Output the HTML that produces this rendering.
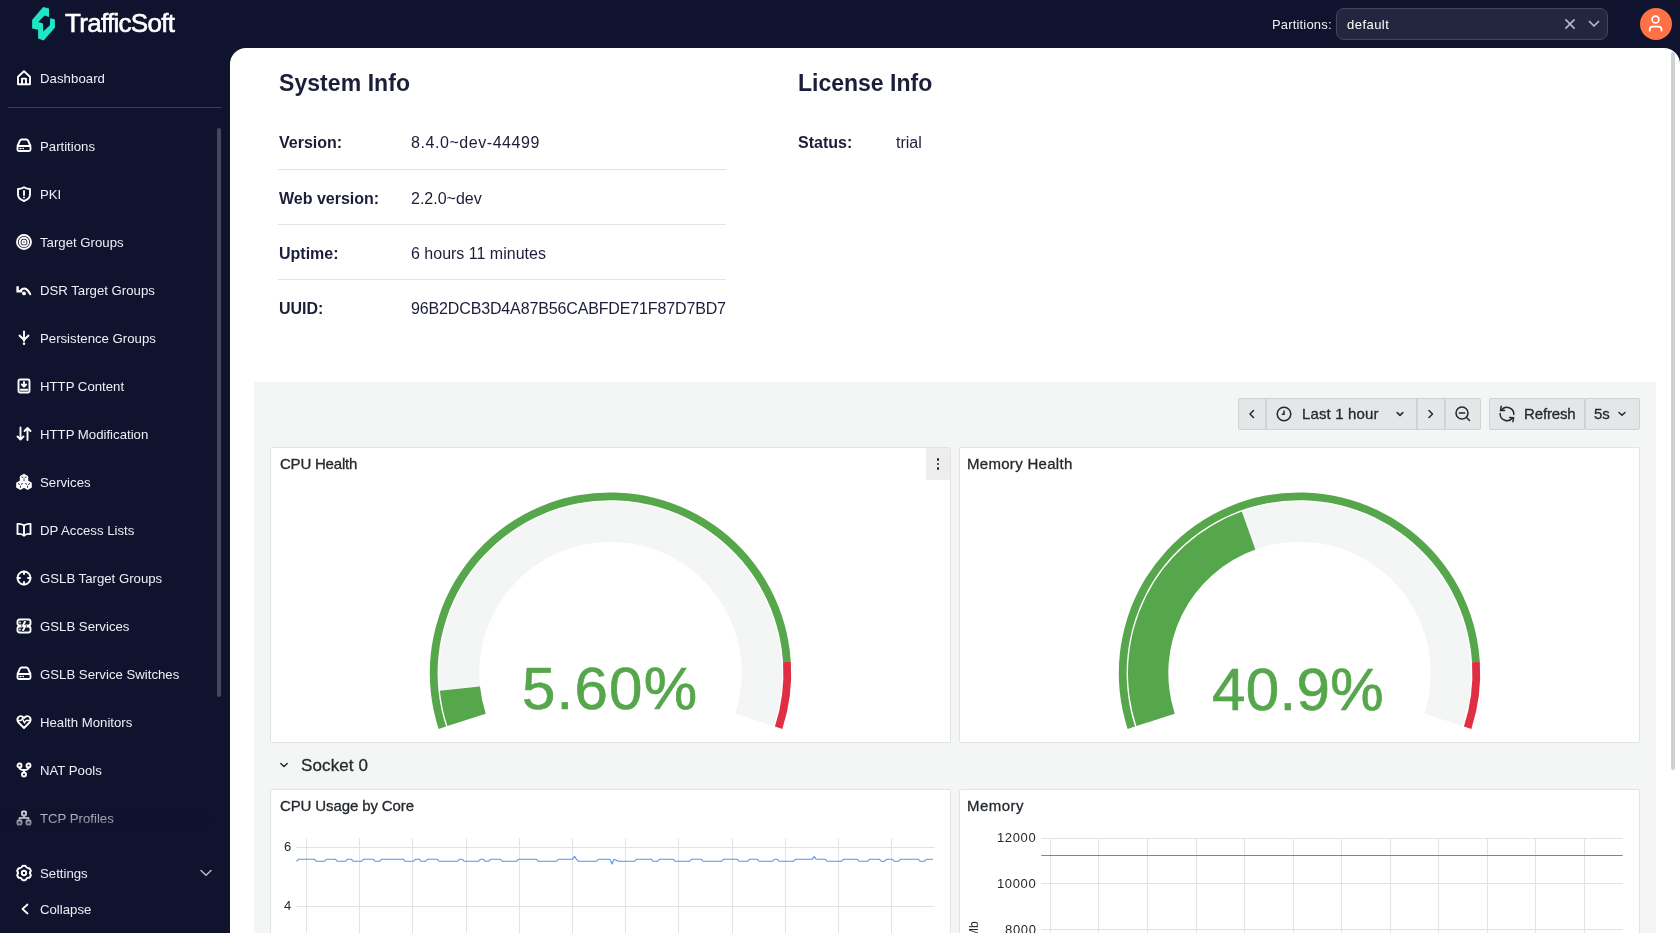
<!DOCTYPE html>
<html><head><meta charset="utf-8">
<style>
*{box-sizing:border-box;margin:0;padding:0}
html,body{width:1680px;height:933px;overflow:hidden;background:#10132e;font-family:"Liberation Sans",sans-serif}
.abs{position:absolute}
.t{position:absolute;white-space:nowrap;line-height:1;will-change:transform}
svg{position:absolute;overflow:visible}
</style></head><body>

<svg style="left:0;top:0" width="80" height="48" viewBox="0 0 80 48">
<path d="M43.2 7.0 L49.0 8.5 L49.0 16.9 L44.5 15.4 L38.3 22.0 L43.0 23.4 L43.2 31.5 L49.9 25.2 L50.2 18.2 L54.8 19.3 L55.0 27.4 L43.7 40.5 L38.1 38.5 L38.1 29.7 L32.1 28.5 L32.1 20.0 Z" fill="#1fe6c8"/>
</svg>
<div class="t" style="left:65.00px;top:10.00px;font-size:26.00px;color:#ffffff;letter-spacing:-0.704px;-webkit-text-stroke:0.6px #fff;">TrafficSoft</div>
<div class="t" style="left:1271.70px;top:18.00px;font-size:13.00px;color:#eeeff4;letter-spacing:0.170px;">Partitions:</div>
<div class="abs" style="left:1336px;top:8px;width:272px;height:32px;border:1px solid #44465d;border-radius:8px;background:#23263f"></div>
<div class="t" style="left:1346.70px;top:18.00px;font-size:13.00px;color:#ffffff;letter-spacing:0.461px;">default</div>
<svg style="left:1564px;top:18px" width="12" height="12" viewBox="0 0 12 12"><path d="M1.9 1.9 L10.1 10.1 M10.1 1.9 L1.9 10.1" stroke="#b9bac6" stroke-width="1.6" stroke-linecap="round"/></svg>
<svg style="left:1588px;top:20px" width="12" height="8" viewBox="0 0 12 8"><path d="M1.5 1.5 L6 6 L10.5 1.5" stroke="#b9bac6" stroke-width="1.7" fill="none" stroke-linecap="round" stroke-linejoin="round"/></svg>
<div class="abs" style="left:1640px;top:8px;width:32px;height:32px;border-radius:50%;background:#ff7245"></div>
<svg style="left:1640px;top:8px" width="32" height="32" viewBox="0 0 32 32">
<circle cx="15.5" cy="11.5" r="3.4" stroke="#fff" stroke-width="1.6" fill="none"/>
<path d="M9.7 23.5 L9.7 21.5 Q9.7 18.6 12.6 18.6 L18.6 18.6 Q21.5 18.6 21.5 21.5 L21.5 23.5" stroke="#fff" stroke-width="1.6" fill="none"/>
</svg>
<svg style="left:16px;top:70px;opacity:1" width="16" height="16" viewBox="0 0 16 16" fill="none" stroke="#ffffff" stroke-width="1.9" stroke-linecap="round" stroke-linejoin="round"><path d="M2 14.2 L2 6.8 L8 1.3 L14 6.8 L14 14.2 Z"/><path d="M6 14.2 L6 8.6 L10 8.6 L10 14.2"/></svg>
<div class="t" style="left:40.20px;top:72.00px;font-size:13.20px;color:#eeeff4;letter-spacing:0.054px;">Dashboard</div>
<div class="abs" style="left:8px;top:107px;width:214px;height:1px;background:#3a3d55"></div>
<div class="abs" style="left:217px;top:128px;width:4px;height:569px;border-radius:2px;background:#45475c"></div>
<svg style="left:16px;top:138px;opacity:1" width="16" height="16" viewBox="0 0 16 16" fill="none" stroke="#ffffff" stroke-width="1.9" stroke-linecap="round" stroke-linejoin="round"><path d="M1.5 8 L4 2.5 Q4.5 1.5 5.5 1.5 L10.5 1.5 Q11.5 1.5 12 2.5 L14.5 8"/><rect x="1.5" y="8" width="13" height="5" rx="1.5"/><path d="M4 10.5 L5 10.5 M7 10.5 L7.5 10.5" stroke-width="1.3"/></svg>
<div class="t" style="left:40.20px;top:140.00px;font-size:13.20px;color:#eeeff4;">Partitions</div>
<svg style="left:16px;top:186px;opacity:1" width="16" height="16" viewBox="0 0 16 16" fill="none" stroke="#ffffff" stroke-width="1.9" stroke-linecap="round" stroke-linejoin="round"><path d="M8 1.2 Q11 3 14 3 L14 8.5 Q14 13 8 15 Q2 13 2 8.5 L2 3 Q5 3 8 1.2 Z"/><path d="M8 5 L8 9"/><path d="M8 11.4 L8 11.5" stroke-width="2"/></svg>
<div class="t" style="left:40.20px;top:188.00px;font-size:13.20px;color:#eeeff4;">PKI</div>
<svg style="left:16px;top:234px;opacity:1" width="16" height="16" viewBox="0 0 16 16" fill="none" stroke="#ffffff" stroke-width="1.9" stroke-linecap="round" stroke-linejoin="round"><circle cx="8" cy="8" r="7"/><circle cx="8" cy="8" r="4.3"/><circle cx="8" cy="8" r="1.6"/></svg>
<div class="t" style="left:40.20px;top:236.00px;font-size:13.20px;color:#eeeff4;">Target Groups</div>
<svg style="left:16px;top:282px;opacity:1" width="16" height="16" viewBox="0 0 16 16" fill="none" stroke="#ffffff" stroke-width="1.9" stroke-linecap="round" stroke-linejoin="round"><path d="M1.6 4.2 L1.6 9.3 L6.3 9.3" stroke-width="2.4" stroke-linecap="butt" stroke-linejoin="miter"/><path d="M4.5 8.4 Q9.5 3.2 14.3 12.2" stroke-width="2"/><circle cx="8" cy="11.4" r="1.9" fill="#fff" stroke="none"/></svg>
<div class="t" style="left:40.20px;top:284.00px;font-size:13.20px;color:#eeeff4;">DSR Target Groups</div>
<svg style="left:16px;top:330px;opacity:1" width="16" height="16" viewBox="0 0 16 16" fill="none" stroke="#ffffff" stroke-width="1.9" stroke-linecap="round" stroke-linejoin="round"><path d="M8 1.5 L8 11"/><path d="M3.5 5.5 L8 10 L12.5 5.5"/><circle cx="8" cy="13.8" r="1.3" fill="#fff" stroke="none"/></svg>
<div class="t" style="left:40.20px;top:332.00px;font-size:13.20px;color:#eeeff4;">Persistence Groups</div>
<svg style="left:16px;top:378px;opacity:1" width="16" height="16" viewBox="0 0 16 16" fill="none" stroke="#ffffff" stroke-width="1.9" stroke-linecap="round" stroke-linejoin="round"><rect x="2.5" y="1.5" width="11" height="13" rx="1.5"/><path d="M8 4 L8 8.5 M5.8 6.5 L8 8.7 L10.2 6.5"/><path d="M4.5 11.8 L11.5 11.8"/></svg>
<div class="t" style="left:40.20px;top:380.00px;font-size:13.20px;color:#eeeff4;">HTTP Content</div>
<svg style="left:16px;top:426px;opacity:1" width="16" height="16" viewBox="0 0 16 16" fill="none" stroke="#ffffff" stroke-width="1.9" stroke-linecap="round" stroke-linejoin="round"><path d="M4.5 1.5 L4.5 13.5 M1.5 10.5 L4.5 13.5 L7.5 10.5"/><path d="M11.5 14 L11.5 2 M8.5 5 L11.5 2 L14.5 5"/></svg>
<div class="t" style="left:40.20px;top:428.00px;font-size:13.20px;color:#eeeff4;">HTTP Modification</div>
<svg style="left:16px;top:474px;opacity:1" width="16" height="16" viewBox="0 0 16 16" fill="none" stroke="#ffffff" stroke-width="1.9" stroke-linecap="round" stroke-linejoin="round"><path d="M8.00 0.60 L11.46 2.60 L11.46 6.60 L8.00 8.60 L4.54 6.60 L4.54 2.60 Z" fill="#fff" stroke="#fff" stroke-width="1.5"/><path d="M4.40 7.20 L7.86 9.20 L7.86 13.20 L4.40 15.20 L0.94 13.20 L0.94 9.20 Z" fill="#fff" stroke="#fff" stroke-width="1.5"/><path d="M11.60 7.20 L15.06 9.20 L15.06 13.20 L11.60 15.20 L8.14 13.20 L8.14 9.20 Z" fill="#fff" stroke="#fff" stroke-width="1.5"/><path d="M5.90 3.00 L7.10 3.70 M10.10 3.00 L8.90 3.70 M8.00 5.50 L8.00 6.80" stroke="#10132e" stroke-width="0.9" stroke-linecap="round"/><path d="M2.30 9.60 L3.50 10.30 M6.50 9.60 L5.30 10.30 M4.40 12.10 L4.40 13.40" stroke="#10132e" stroke-width="0.9" stroke-linecap="round"/><path d="M9.50 9.60 L10.70 10.30 M13.70 9.60 L12.50 10.30 M11.60 12.10 L11.60 13.40" stroke="#10132e" stroke-width="0.9" stroke-linecap="round"/></svg>
<div class="t" style="left:40.20px;top:476.00px;font-size:13.20px;color:#eeeff4;">Services</div>
<svg style="left:16px;top:522px;opacity:1" width="16" height="16" viewBox="0 0 16 16" fill="none" stroke="#ffffff" stroke-width="1.9" stroke-linecap="round" stroke-linejoin="round"><path d="M8 3.5 Q5 1.5 1.5 2 L1.5 12 Q5 11.5 8 13.5 Q11 11.5 14.5 12 L14.5 2 Q11 1.5 8 3.5 Z"/><path d="M8 3.5 L8 13.5"/></svg>
<div class="t" style="left:40.20px;top:524.00px;font-size:13.20px;color:#eeeff4;">DP Access Lists</div>
<svg style="left:16px;top:570px;opacity:1" width="16" height="16" viewBox="0 0 16 16" fill="none" stroke="#ffffff" stroke-width="1.9" stroke-linecap="round" stroke-linejoin="round"><circle cx="8" cy="8" r="6.5"/><path d="M8 1.5 L8 4 M8 12 L8 14.5 M1.5 8 L4 8 M12 8 L14.5 8"/></svg>
<div class="t" style="left:40.20px;top:572.00px;font-size:13.20px;color:#eeeff4;">GSLB Target Groups</div>
<svg style="left:16px;top:618px;opacity:1" width="16" height="16" viewBox="0 0 16 16" fill="none" stroke="#ffffff" stroke-width="1.9" stroke-linecap="round" stroke-linejoin="round"><rect x="1.5" y="1.5" width="13" height="6" rx="2"/><rect x="1.5" y="8.5" width="13" height="6" rx="2"/><path d="M9 3.5 L6.8 8 L9.2 8 L7 12.5" stroke="#10132e" stroke-width="3"/><path d="M9 3.5 L6.8 8 L9.2 8 L7 12.5"/><path d="M4 4.5 L4 4.6 M4 11.5 L4 11.6" stroke-width="1.8"/></svg>
<div class="t" style="left:40.20px;top:620.00px;font-size:13.20px;color:#eeeff4;">GSLB Services</div>
<svg style="left:16px;top:666px;opacity:1" width="16" height="16" viewBox="0 0 16 16" fill="none" stroke="#ffffff" stroke-width="1.9" stroke-linecap="round" stroke-linejoin="round"><path d="M1.5 8 L4 2.5 Q4.5 1.5 5.5 1.5 L10.5 1.5 Q11.5 1.5 12 2.5 L14.5 8"/><rect x="1.5" y="8" width="13" height="5" rx="1.5"/><path d="M4 10.5 L5 10.5 M7 10.5 L7.5 10.5" stroke-width="1.3"/></svg>
<div class="t" style="left:40.20px;top:668.00px;font-size:13.20px;color:#eeeff4;">GSLB Service Switches</div>
<svg style="left:16px;top:714px;opacity:1" width="16" height="16" viewBox="0 0 16 16" fill="none" stroke="#ffffff" stroke-width="1.9" stroke-linecap="round" stroke-linejoin="round"><path d="M8 14 L2.5 8.5 Q0.5 6 2 3.5 Q4.5 0.5 8 4 Q11.5 0.5 14 3.5 Q15.5 6 13.5 8.5 Z"/><path d="M2 6.5 L5 6.5 L6.5 4.8 L8.5 9 L10 6.5 L14 6.5" stroke-width="1.4"/></svg>
<div class="t" style="left:40.20px;top:716.00px;font-size:13.20px;color:#eeeff4;">Health Monitors</div>
<svg style="left:16px;top:762px;opacity:1" width="16" height="16" viewBox="0 0 16 16" fill="none" stroke="#ffffff" stroke-width="1.9" stroke-linecap="round" stroke-linejoin="round"><circle cx="3.5" cy="3.5" r="2"/><circle cx="12.5" cy="3.5" r="2"/><circle cx="8" cy="12.5" r="2"/><path d="M3.5 5.5 Q3.5 8 8 8 Q12.5 8 12.5 5.5 M8 8 L8 10.5"/></svg>
<div class="t" style="left:40.20px;top:764.00px;font-size:13.20px;color:#eeeff4;">NAT Pools</div>
<svg style="left:16px;top:810px;opacity:1" width="16" height="16" viewBox="0 0 16 16" fill="none" stroke="#ffffff" stroke-width="1.9" stroke-linecap="round" stroke-linejoin="round"><rect x="6" y="1.5" width="4" height="4" rx="1"/><rect x="1.5" y="10.5" width="4" height="4" rx="1"/><rect x="10.5" y="10.5" width="4" height="4" rx="1"/><path d="M8 5.5 L8 8 M3.5 10.5 L3.5 8 L12.5 8 L12.5 10.5"/></svg>
<div class="t" style="left:40.20px;top:812.00px;font-size:13.20px;color:#eeeff4;">TCP Profiles</div>
<div class="abs" style="left:0;top:804px;width:214px;height:40px;background:linear-gradient(to bottom, rgba(16,19,46,0), rgba(16,19,46,1))"></div>
<svg style="left:16px;top:865px;opacity:1" width="16" height="16" viewBox="0 0 16 16" fill="none" stroke="#ffffff" stroke-width="1.9" stroke-linecap="round" stroke-linejoin="round"><path d="M6.38 0.98 A7.20 7.20 0 0 1 9.62 0.98 Q10.50 3.67 13.27 3.09 A7.20 7.20 0 0 1 14.89 5.89 Q13.00 8.00 14.89 10.11 A7.20 7.20 0 0 1 13.27 12.91 Q10.50 12.33 9.62 15.02 A7.20 7.20 0 0 1 6.38 15.02 Q5.50 12.33 2.73 12.91 A7.20 7.20 0 0 1 1.11 10.11 Q3.00 8.00 1.11 5.89 A7.20 7.20 0 0 1 2.73 3.09 Q5.50 3.67 6.38 0.98 Z"/><circle cx="8" cy="8" r="2.2"/></svg>
<div class="t" style="left:40.20px;top:867.00px;font-size:13.20px;color:#eeeff4;">Settings</div>
<svg style="left:200px;top:869px" width="12" height="8" viewBox="0 0 12 8"><path d="M1 1.5 L6 6.3 L11 1.5" stroke="#b9bac6" stroke-width="1.5" fill="none" stroke-linecap="round" stroke-linejoin="round"/></svg>
<svg style="left:20px;top:903px" width="10" height="12" viewBox="0 0 10 12"><path d="M7.5 1.5 L2.5 6 L7.5 10.5" stroke="#fff" stroke-width="1.7" fill="none" stroke-linecap="round" stroke-linejoin="round"/></svg>
<div class="t" style="left:40.20px;top:903.00px;font-size:13.20px;color:#eeeff4;">Collapse</div>
<div class="abs" style="left:230px;top:48px;width:1450px;height:900px;background:#fff;border-radius:16px 16px 0 0"></div>
<div class="abs" style="left:1671px;top:52px;width:4px;height:718px;border-radius:2px;background:#cfd0d6"></div>
<div class="t" style="left:278.80px;top:72.00px;font-size:23.00px;color:#1b1e38;font-weight:bold;letter-spacing:0.063px;">System Info</div>
<div class="t" style="left:798.00px;top:72.00px;font-size:23.00px;color:#1b1e38;font-weight:bold;">License Info</div>
<div class="t" style="left:278.90px;top:135.00px;font-size:16.00px;color:#1b1e38;font-weight:bold;">Version:</div>
<div class="t" style="left:411.00px;top:135.00px;font-size:16.00px;color:#1b1e38;letter-spacing:0.561px;">8.4.0~dev-44499</div>
<div class="t" style="left:278.90px;top:191.00px;font-size:16.00px;color:#1b1e38;font-weight:bold;">Web version:</div>
<div class="t" style="left:411.00px;top:191.00px;font-size:16.00px;color:#1b1e38;">2.2.0~dev</div>
<div class="t" style="left:278.90px;top:246.00px;font-size:16.00px;color:#1b1e38;font-weight:bold;">Uptime:</div>
<div class="t" style="left:411.00px;top:246.00px;font-size:16.00px;color:#1b1e38;">6 hours 11 minutes</div>
<div class="t" style="left:278.90px;top:301.00px;font-size:16.00px;color:#1b1e38;font-weight:bold;">UUID:</div>
<div class="t" style="left:411.00px;top:301.00px;font-size:16.00px;color:#1b1e38;letter-spacing:-0.138px;">96B2DCB3D4A87B56CABFDE71F87D7BD7</div>
<div class="abs" style="left:278px;top:169px;width:448px;height:1px;background:#e3e3e3"></div>
<div class="abs" style="left:278px;top:224px;width:448px;height:1px;background:#e3e3e3"></div>
<div class="abs" style="left:278px;top:279px;width:448px;height:1px;background:#e3e3e3"></div>
<div class="t" style="left:798.00px;top:135.00px;font-size:16.00px;color:#1b1e38;font-weight:bold;">Status:</div>
<div class="t" style="left:896.00px;top:135.00px;font-size:16.00px;color:#1b1e38;">trial</div>
<div class="abs" style="left:254px;top:382px;width:1402px;height:560px;background:#f4f5f5"></div>
<div class="abs" style="left:1238.0px;top:398px;width:28.0px;height:32px;background:#e5e6e7;border:1px solid #d0d2d5;border-radius:2px 0 0 2px"></div>
<div class="abs" style="left:1266.0px;top:398px;width:151.0px;height:32px;background:#e5e6e7;border:1px solid #d0d2d5;"></div>
<div class="abs" style="left:1417.0px;top:398px;width:28.0px;height:32px;background:#e5e6e7;border:1px solid #d0d2d5;"></div>
<div class="abs" style="left:1445.0px;top:398px;width:36.0px;height:32px;background:#e5e6e7;border:1px solid #d0d2d5;border-radius:0 2px 2px 0"></div>
<div class="abs" style="left:1489.0px;top:398px;width:96.0px;height:32px;background:#e5e6e7;border:1px solid #d0d2d5;border-radius:2px 0 0 2px"></div>
<div class="abs" style="left:1585.0px;top:398px;width:55.0px;height:32px;background:#e5e6e7;border:1px solid #d0d2d5;border-radius:0 2px 2px 0"></div>
<svg style="left:1246px;top:408px" width="12" height="12" viewBox="0 0 12 12"><path d="M7.5 2.5 L4 6 L7.5 9.5" stroke="#24292e" stroke-width="1.5" fill="none" stroke-linecap="round" stroke-linejoin="round"/></svg>
<svg style="left:1276px;top:406px" width="16" height="16" viewBox="0 0 16 16"><circle cx="8" cy="8" r="6.8" stroke="#24292e" stroke-width="1.5" fill="none"/><path d="M8 4.5 L8 8.2 L5.8 8.2" stroke="#24292e" stroke-width="1.5" fill="none"/></svg>
<div class="t" style="left:1301.50px;top:406.00px;font-size:15.00px;color:#24292e;letter-spacing:0.135px;-webkit-text-stroke:0.3px #24292e;">Last 1 hour</div>
<svg style="left:1394px;top:410px" width="12" height="8" viewBox="0 0 12 8"><path d="M3.2 2.6 L6 5.4 L8.8 2.6" stroke="#24292e" stroke-width="1.5" fill="none" stroke-linecap="round" stroke-linejoin="round"/></svg>
<svg style="left:1424px;top:408px" width="12" height="12" viewBox="0 0 12 12"><path d="M5 2.5 L8.5 6 L5 9.5" stroke="#24292e" stroke-width="1.5" fill="none" stroke-linecap="round" stroke-linejoin="round"/></svg>
<svg style="left:1454px;top:405px" width="18" height="18" viewBox="0 0 18 18"><circle cx="8" cy="8" r="6" stroke="#24292e" stroke-width="1.5" fill="none"/><path d="M5.3 8 L10.7 8 M12.3 12.3 L15.5 15.5" stroke="#24292e" stroke-width="1.5" fill="none" stroke-linecap="round"/></svg>
<svg style="left:1498px;top:405px" width="18" height="18" viewBox="0 0 18 18" fill="none" stroke="#24292e" stroke-width="1.5" stroke-linecap="round" stroke-linejoin="round"><path d="M3.4 5.3 A6.8 6.8 0 0 1 15.8 9.4"/><path d="M2.2 8.6 A6.8 6.8 0 0 0 14.4 13"/><path d="M3.2 1.3 L2.5 5.5 L6.6 5.5"/><path d="M11.6 12.4 L15.6 12.7 L14.9 16.7"/></svg>
<div class="t" style="left:1524.30px;top:406.00px;font-size:15.00px;color:#24292e;letter-spacing:-0.137px;-webkit-text-stroke:0.3px #24292e;">Refresh</div>
<div class="t" style="left:1594.30px;top:406.00px;font-size:15.00px;color:#24292e;-webkit-text-stroke:0.3px #24292e;">5s</div>
<svg style="left:1616px;top:410px" width="12" height="8" viewBox="0 0 12 8"><path d="M3 2.5 L6 5.3 L9 2.5" stroke="#24292e" stroke-width="1.5" fill="none" stroke-linecap="round" stroke-linejoin="round"/></svg>
<div class="abs" style="left:270.0px;top:447.0px;width:681.0px;height:296.0px;background:#fff;border:1px solid #e2e3e5;border-radius:2px"></div>
<div class="abs" style="left:959.0px;top:447.0px;width:681.0px;height:296.0px;background:#fff;border:1px solid #e2e3e5;border-radius:2px"></div>
<div class="abs" style="left:270.0px;top:789.0px;width:681.0px;height:200.0px;background:#fff;border:1px solid #e2e3e5;border-radius:2px"></div>
<div class="abs" style="left:959.0px;top:789.0px;width:681.0px;height:200.0px;background:#fff;border:1px solid #e2e3e5;border-radius:2px"></div>
<div class="abs" style="left:926px;top:448px;width:24px;height:32px;background:#ededed;border-radius:2px"></div>
<div class="abs" style="left:936.6px;top:457.8px;width:2.8px;height:2.8px;border-radius:50%;background:#24292e"></div>
<div class="abs" style="left:936.6px;top:462.6px;width:2.8px;height:2.8px;border-radius:50%;background:#24292e"></div>
<div class="abs" style="left:936.6px;top:467.3px;width:2.8px;height:2.8px;border-radius:50%;background:#24292e"></div>
<div class="t" style="left:279.70px;top:456.00px;font-size:15.00px;color:#24292e;letter-spacing:-0.211px;-webkit-text-stroke:0.3px #24292e;">CPU Health</div>
<div class="t" style="left:967.00px;top:456.00px;font-size:15.00px;color:#24292e;letter-spacing:0.300px;-webkit-text-stroke:0.3px #24292e;">Memory Health</div>
<div class="t" style="left:279.70px;top:798.00px;font-size:15.00px;color:#24292e;letter-spacing:-0.118px;-webkit-text-stroke:0.3px #24292e;">CPU Usage by Core</div>
<div class="t" style="left:967.00px;top:798.00px;font-size:15.00px;color:#24292e;letter-spacing:0.486px;-webkit-text-stroke:0.3px #24292e;">Memory</div>
<svg style="left:278px;top:761px" width="12" height="8" viewBox="0 0 12 8"><path d="M2.8 2.5 L6 5.5 L9.2 2.5" stroke="#24292e" stroke-width="1.5" fill="none" stroke-linecap="round" stroke-linejoin="round"/></svg>
<div class="t" style="left:300.70px;top:757.00px;font-size:17.00px;color:#24292e;letter-spacing:0.121px;-webkit-text-stroke:0.3px #24292e;">Socket 0</div>
<svg style="left:0;top:0" width="1680" height="933" viewBox="0 0 1680 933"><path d="M447.39 726.10 A171.50 171.50 0 1 1 773.61 726.10 L735.28 713.64 A131.20 131.20 0 1 0 485.72 713.64 Z" fill="#f4f5f5"/><path d="M447.39 726.10 A171.50 171.50 0 0 1 439.91 690.74 L480.00 686.60 A131.20 131.20 0 0 0 485.72 713.64 Z" fill="#56a64b"/><path d="M438.64 728.94 A180.70 180.70 0 1 1 790.84 661.75 L783.06 662.24 A172.90 172.90 0 1 0 446.06 726.53 Z" fill="#56a64b"/><path d="M790.84 661.75 A180.70 180.70 0 0 1 782.36 728.94 L774.94 726.53 A172.90 172.90 0 0 0 783.06 662.24 Z" fill="#e02f44"/></svg>
<svg style="left:0;top:0" width="1680" height="933" viewBox="0 0 1680 933"><path d="M1136.39 726.10 A171.50 171.50 0 1 1 1462.61 726.10 L1424.28 713.64 A131.20 131.20 0 1 0 1174.72 713.64 Z" fill="#f4f5f5"/><path d="M1136.39 726.10 A171.50 171.50 0 0 1 1241.81 511.59 L1255.37 549.55 A131.20 131.20 0 0 0 1174.72 713.64 Z" fill="#56a64b"/><path d="M1127.64 728.94 A180.70 180.70 0 1 1 1479.84 661.75 L1472.06 662.24 A172.90 172.90 0 1 0 1135.06 726.53 Z" fill="#56a64b"/><path d="M1479.84 661.75 A180.70 180.70 0 0 1 1471.36 728.94 L1463.94 726.53 A172.90 172.90 0 0 0 1472.06 662.24 Z" fill="#e02f44"/></svg>
<div class="t" style="left:522.00px;top:659.00px;font-size:60.00px;color:#56a64b;letter-spacing:1.218px;-webkit-text-stroke:0.7px #56a64b;">5.60%</div>
<div class="t" style="left:1212.00px;top:660.00px;font-size:60.00px;color:#56a64b;letter-spacing:0.343px;-webkit-text-stroke:0.7px #56a64b;">40.9%</div>
<svg style="left:0;top:0" width="1680" height="933" viewBox="0 0 1680 933"><path d="M296.4 847.5 L934.7 847.5" stroke="#e3e3e3" stroke-width="1"/><path d="M296.4 906.5 L934.7 906.5" stroke="#e3e3e3" stroke-width="1"/><path d="M306.5 838.5 L306.5 933" stroke="#e3e3e3" stroke-width="1"/><path d="M359.5 838.5 L359.5 933" stroke="#e3e3e3" stroke-width="1"/><path d="M412.5 838.5 L412.5 933" stroke="#e3e3e3" stroke-width="1"/><path d="M466.5 838.5 L466.5 933" stroke="#e3e3e3" stroke-width="1"/><path d="M519.5 838.5 L519.5 933" stroke="#e3e3e3" stroke-width="1"/><path d="M572.5 838.5 L572.5 933" stroke="#e3e3e3" stroke-width="1"/><path d="M625.5 838.5 L625.5 933" stroke="#e3e3e3" stroke-width="1"/><path d="M678.5 838.5 L678.5 933" stroke="#e3e3e3" stroke-width="1"/><path d="M732.5 838.5 L732.5 933" stroke="#e3e3e3" stroke-width="1"/><path d="M785.5 838.5 L785.5 933" stroke="#e3e3e3" stroke-width="1"/><path d="M838.5 838.5 L838.5 933" stroke="#e3e3e3" stroke-width="1"/><path d="M891.5 838.5 L891.5 933" stroke="#e3e3e3" stroke-width="1"/><path d="M296.4 861.3 L298.4 859.3 L304.4 859.3 L306.4 859.3 L314.4 859.3 L316.4 861.3 L319.4 861.3 L321.4 861.3 L324.4 861.3 L326.4 859.3 L329.4 859.3 L331.4 859.3 L335.4 859.3 L337.4 861.3 L345.4 861.3 L347.4 859.3 L351.4 859.3 L353.4 861.3 L361.4 861.3 L363.4 859.3 L373.4 859.3 L375.4 861.3 L379.4 861.3 L381.4 859.3 L391.4 859.3 L393.4 859.3 L403.4 859.3 L405.4 861.3 L408.4 861.3 L410.4 861.3 L413.4 861.3 L415.4 859.3 L419.4 859.3 L421.4 861.3 L425.4 861.3 L427.4 859.3 L437.4 859.3 L439.4 861.3 L457.4 861.3 L459.4 859.3 L462.4 859.3 L464.4 861.3 L478.4 861.3 L480.4 859.3 L483.4 859.3 L485.4 861.3 L488.4 861.3 L490.4 859.3 L500.4 859.3 L502.4 861.3 L516.4 861.3 L518.4 859.3 L536.4 859.3 L538.4 861.3 L548.4 861.3 L550.4 861.3 L556.4 861.3 L558.4 859.3 L572.5 859.3 L574.5 856.4 L576.5 859.3 L578.4 861.3 L596.4 861.3 L598.4 859.3 L608.4 859.3 L610.0 859.3 L612.0 864.0 L614.0 859.3 L618.4 861.3 L620.4 861.3 L634.4 861.3 L636.4 859.3 L646.4 859.3 L648.4 859.3 L651.4 859.3 L653.4 861.3 L657.4 861.3 L659.4 859.3 L663.4 859.3 L665.4 859.3 L673.4 859.3 L675.4 861.3 L689.4 861.3 L691.4 859.3 L701.4 859.3 L703.4 861.3 L721.4 861.3 L723.4 859.3 L737.4 859.3 L739.4 861.3 L747.4 861.3 L749.4 859.3 L757.4 859.3 L759.4 861.3 L762.4 861.3 L764.4 861.3 L772.4 861.3 L774.4 859.3 L777.4 859.3 L779.4 861.3 L793.4 861.3 L795.4 859.3 L805.4 859.3 L807.4 859.3 L812.3 859.3 L814.3 856.6 L816.3 859.3 L825.4 859.3 L827.4 861.3 L841.4 861.3 L843.4 859.3 L857.4 859.3 L859.4 861.3 L867.4 861.3 L869.4 859.3 L879.4 859.3 L881.4 861.3 L884.4 861.3 L886.4 859.3 L892.4 859.3 L894.4 861.3 L898.4 861.3 L900.4 859.3 L918.4 859.3 L920.4 861.3 L924.4 861.3 L926.4 859.3 L933.0 859.3" stroke="#5794f2" stroke-width="1.1" fill="none" stroke-linejoin="round"/><path d="M1041.3 838.5 L1622.7 838.5" stroke="#e3e3e3" stroke-width="1"/><path d="M1041.3 883.5 L1622.7 883.5" stroke="#e3e3e3" stroke-width="1"/><path d="M1041.3 929.5 L1622.7 929.5" stroke="#e3e3e3" stroke-width="1"/><path d="M1050.5 838.5 L1050.5 933" stroke="#e3e3e3" stroke-width="1"/><path d="M1098.5 838.5 L1098.5 933" stroke="#e3e3e3" stroke-width="1"/><path d="M1147.5 838.5 L1147.5 933" stroke="#e3e3e3" stroke-width="1"/><path d="M1196.5 838.5 L1196.5 933" stroke="#e3e3e3" stroke-width="1"/><path d="M1244.5 838.5 L1244.5 933" stroke="#e3e3e3" stroke-width="1"/><path d="M1293.5 838.5 L1293.5 933" stroke="#e3e3e3" stroke-width="1"/><path d="M1341.5 838.5 L1341.5 933" stroke="#e3e3e3" stroke-width="1"/><path d="M1390.5 838.5 L1390.5 933" stroke="#e3e3e3" stroke-width="1"/><path d="M1438.5 838.5 L1438.5 933" stroke="#e3e3e3" stroke-width="1"/><path d="M1487.5 838.5 L1487.5 933" stroke="#e3e3e3" stroke-width="1"/><path d="M1535.5 838.5 L1535.5 933" stroke="#e3e3e3" stroke-width="1"/><path d="M1584.5 838.5 L1584.5 933" stroke="#e3e3e3" stroke-width="1"/><path d="M1041.3 855.5 L1622.7 855.5" stroke="#56a64b" stroke-width="1"/></svg>
<div class="t" style="left:283.50px;top:840.00px;font-size:13.00px;color:#24292e;">6</div>
<div class="t" style="left:283.50px;top:899.00px;font-size:13.00px;color:#24292e;">4</div>
<div class="t" style="left:996.90px;top:831.00px;font-size:13.00px;color:#24292e;letter-spacing:0.638px;">12000</div>
<div class="t" style="left:996.90px;top:877.00px;font-size:13.00px;color:#24292e;letter-spacing:0.638px;">10000</div>
<div class="t" style="left:1004.64px;top:923.00px;font-size:13.00px;color:#24292e;letter-spacing:0.680px;">8000</div>
<div class="t" style="left:968px;top:938px;font-size:12px;color:#24292e;transform:rotate(-90deg);transform-origin:left top">Mb</div>
</body></html>
